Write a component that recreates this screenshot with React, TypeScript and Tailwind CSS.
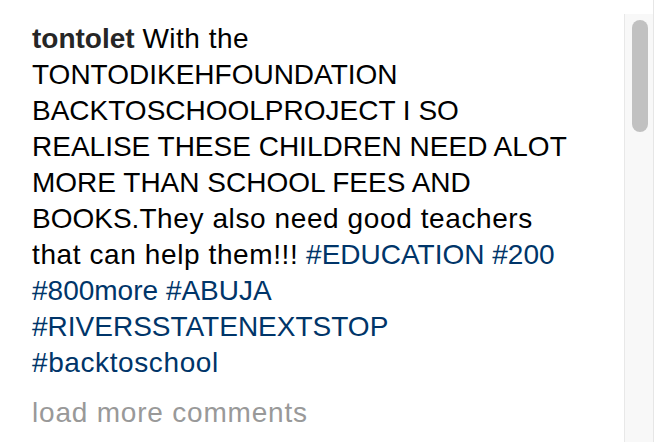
import React from "react";

const Tag = ({ children }: { children: React.ReactNode }) => (
  <span className="text-[#003569]">{children}</span>
);

export default function App() {
  const font = { fontFamily: '"Liberation Sans", Arial, sans-serif' };
  return (
    <div className="flex w-[656px] h-[442px] bg-white overflow-hidden" style={font}>
      <div className="w-[624px] pl-[32px] pt-[21px]">
        <div className="flex flex-col text-[28px] leading-[36px] text-black whitespace-nowrap">
          <span>
            <span className="font-bold text-[#262626]">tontolet</span>{" "}
            <span className="tracking-[0.5px]">With the</span>
          </span>
          <span>TONTODIKEHFOUNDATION</span>
          <span>BACKTOSCHOOLPROJECT I SO</span>
          <span>REALISE THESE CHILDREN NEED ALOT</span>
          <span>MORE THAN SCHOOL FEES AND</span>
          <span>
            BOOKS.<span className="tracking-[0.6px]">They also need good teachers</span>
          </span>
          <span>
            <span className="tracking-[0.6px]">that can help them!!!</span> <Tag>#EDUCATION</Tag>{" "}
            <Tag>#200</Tag>
          </span>
          <span>
            <Tag>#800more</Tag> <Tag>#ABUJA</Tag>
          </span>
          <span>
            <Tag>#RIVERSSTATENEXTSTOP</Tag>
          </span>
          <span>
            <Tag>
              <span className="tracking-[0.6px]">#backtoschool</span>
            </Tag>
          </span>
        </div>
        <p className="mt-[14px] text-[28px] leading-[36px] tracking-[0.8px] text-[#999999] whitespace-nowrap">
          load more comments
        </p>
      </div>
      <div className="mt-[14px] w-[29px] border-l border-[#e8e8e8] bg-[#f8f8f8] pl-[7px] pt-[6px]">
        <div className="w-[16px] h-[112px] rounded-full bg-[#c1c1c1]" />
      </div>
      <div className="w-px bg-[#e6e6e6]" />
      <div className="w-[2px] bg-white" />
    </div>
  );
}
